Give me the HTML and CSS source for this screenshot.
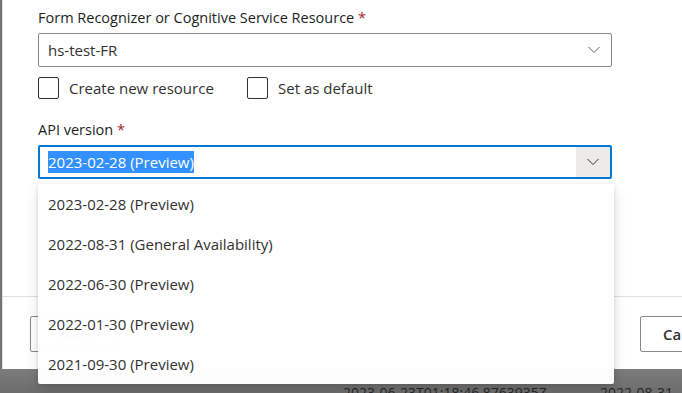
FILE: index.html
```html
<!DOCTYPE html>
<html lang="en">
<head>
    <meta charset="UTF-8">
    <title>Service resource settings</title>
    <link rel="stylesheet" href="styles.css">
</head>
<body>
    <!-- Dialog -->
    <div class="dialog">
        <div class="form">
            <label class="field-label">Form Recognizer or Cognitive Service Resource <span class="req">*</span></label>
            <div class="select">
                <span class="select-text">hs-test-FR</span>
                <span class="caret">
                    <svg width="12" height="8" viewBox="0 0 12 8"><path d="M0.5 1 L6 6.5 L11.5 1" fill="none" stroke="#605e5c" stroke-width="1"/></svg>
                </span>
            </div>
            <div class="checks">
                <div class="check"><span class="box"></span>Create new resource</div>
                <div class="check"><span class="box"></span>Set as default</div>
            </div>

            <label class="field-label api-label">API version <span class="req">*</span></label>
            <div class="select focused">
                <span class="select-text"><span class="selected">2023-02-28 (Preview)</span></span>
                <span class="caret caret-open">
                    <svg width="12" height="8" viewBox="0 0 12 8"><path d="M0.5 1 L6 6.5 L11.5 1" fill="none" stroke="#323130" stroke-width="1"/></svg>
                </span>
            </div>
            <p class="hint">Version 2023-02-28 (Preview) is not compatible with previous API versions. Select<br>2022-08-31 (General Availability) to see previously trained models.</p>
        </div>

        <div class="footer">
            <button class="btn btn-left">Back</button>
            <button class="btn btn-primary">Continue</button>
            <span class="spacer"></span>
            <button class="btn btn-cancel">Cancel</button>
        </div>
    </div>

    <!-- Table behind the dimmed overlay -->
    <div class="backdrop">
        <span class="cell-date">2023-06-23T01:18:46.8763935Z</span>
        <span class="cell-version">2022-08-31</span>
    </div>

    <!-- Open dropdown -->
    <ul class="menu">
        <li>2023-02-28 (Preview)</li>
        <li>2022-08-31 (General Availability)</li>
        <li>2022-06-30 (Preview)</li>
        <li>2022-01-30 (Preview)</li>
        <li>2021-09-30 (Preview)</li>
    </ul>
</body>
</html>
```

FILE: styles.css
```css
body {
    margin: 0;
    width: 682px;
    height: 393px;
    overflow: hidden;
    font-family: 'Segoe UI', 'Open Sans', sans-serif;
    font-size: 15px;
    color: #323130;
    background-color: #747474;
    position: relative;
}

.dialog {
    height: 369px;
    background-color: #fff;
    border-left: 1px solid #e1dfdd;
    margin-left: 2px;
    display: flex;
    flex-direction: column;
    overflow: hidden;
}

.form {
    padding: 8px 0 0 35px;
    width: 574px;
    height: 288px;
}

.field-label {
    display: block;
    line-height: 20px;
    height: 20px;
    font-size: 14.5px;
    color: #201f1e;
}

.req {
    color: #a4262c;
}

.select {
    margin-top: 5px;
    height: 32px;
    border: 1px solid #8a8886;
    border-radius: 2px;
    display: flex;
    align-items: center;
}

.select-text {
    flex: 1;
    padding-left: 9px;
    line-height: 20px;
}

.caret {
    width: 34px;
    height: 100%;
    display: flex;
    align-items: center;
    justify-content: center;
}

.select.focused {
    height: 30px;
    border: 2px solid #0078d4;
}

.focused .select-text {
    padding-left: 8px;
}

.caret-open {
    background-color: #edebe9;
}

.selected {
    background-color: #3390ff;
    color: #fff;
    padding: 1px 0;
}

.checks {
    display: flex;
    margin-top: 10px;
    height: 22px;
}

.check {
    display: flex;
    align-items: center;
    gap: 10px;
    width: 209px;
}

.box {
    width: 19px;
    height: 20px;
    border: 1px solid #323130;
    border-radius: 2px;
}

.api-label {
    margin-top: 21px;
}

.hint {
    margin: 16px 0 0 10px;
    line-height: 20px;
    color: #f2f2f2;
}

/* Footer */
.footer {
    border-top: 1px solid #e1dfdd;
    flex: 1;
    display: flex;
    align-items: flex-start;
    padding: 19px 0 0 27px;
    gap: 8px;
    overflow: hidden;
}

.btn {
    font-family: inherit;
    font-size: 15px;
    font-weight: 600;
    height: 36px;
    padding: 0 20px;
    border: 1px solid #8a8886;
    border-radius: 2px;
    background-color: #fff;
    color: #323130;
    flex-shrink: 0;
}

.btn-left {
    width: 90px;
}

.btn-primary {
    margin-top: 2px;
    height: 32px;
    border-color: #f6f6f6;
    color: #fafafa;
    width: 110px;
}

.spacer {
    flex: 1;
}

.btn-cancel {
    width: 80px;
    margin-right: -38px;
    padding: 0 0 0 22px;
    text-align: left;
}

/* Dimmed table row */
.backdrop {
    height: 24px;
    position: relative;
    overflow: hidden;
    background: linear-gradient(#7c7c7c, #6c6c6c);
    color: #262626;
    font-size: 14px;
}

.cell-date,
.cell-version {
    position: absolute;
    top: 14px;
    line-height: 20px;
}

.cell-date {
    left: 343px;
}

.cell-version {
    left: 600px;
}

/* Dropdown list */
.menu {
    position: absolute;
    top: 184px;
    left: 38px;
    width: 576px;
    margin: 0;
    padding: 0;
    list-style: none;
    background-color: rgba(255, 255, 255, 0.985);
    border-radius: 2px;
    box-shadow: 0 6px 14px rgba(0, 0, 0, 0.13), 0 1px 4px rgba(0, 0, 0, 0.11);
}

.menu li {
    height: 40px;
    line-height: 40px;
    padding-left: 10px;
}
```
